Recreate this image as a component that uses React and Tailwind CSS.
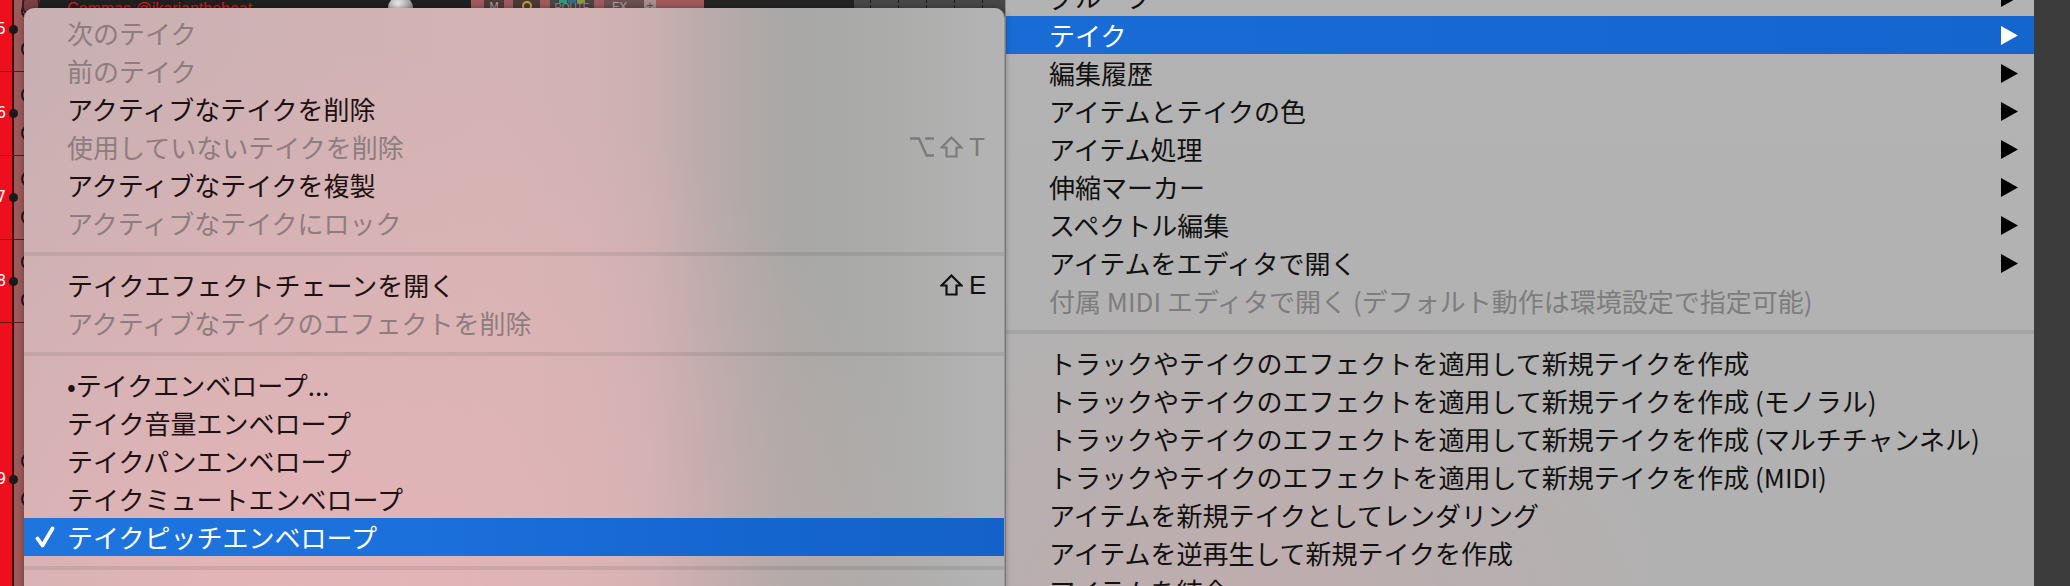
import React from "react";

const leftItems = [
  { t: "次のテイク", d: true },
  { t: "前のテイク", d: true },
  { t: "アクティブなテイクを削除" },
  { t: "使用していないテイクを削除", d: true, sc: "optshiftT" },
  { t: "アクティブなテイクを複製" },
  { t: "アクティブなテイクにロック", d: true },
  { sep: true },
  { t: "テイクエフェクトチェーンを開く", sc: "shiftE" },
  { t: "アクティブなテイクのエフェクトを削除", d: true },
  { sep: true },
  { t: "•テイクエンベロープ..." },
  { t: "テイク音量エンベロープ" },
  { t: "テイクパンエンベロープ" },
  { t: "テイクミュートエンベロープ" },
  { t: "テイクピッチエンベロープ", hl: true, check: true },
  { sep: true },
  { t: "テイクを切り替え" },
];

const rightItems = [
  { t: "グループ", arrow: true },
  { t: "テイク", arrow: true, hl: true },
  { t: "編集履歴", arrow: true },
  { t: "アイテムとテイクの色", arrow: true },
  { t: "アイテム処理", arrow: true },
  { t: "伸縮マーカー", arrow: true },
  { t: "スペクトル編集", arrow: true },
  { t: "アイテムをエディタで開く", arrow: true },
  { t: "付属 MIDI エディタで開く (デフォルト動作は環境設定で指定可能)", d: true },
  { sep: true },
  { t: "トラックやテイクのエフェクトを適用して新規テイクを作成" },
  { t: "トラックやテイクのエフェクトを適用して新規テイクを作成 (モノラル)" },
  { t: "トラックやテイクのエフェクトを適用して新規テイクを作成 (マルチチャンネル)" },
  { t: "トラックやテイクのエフェクトを適用して新規テイクを作成 (MIDI)" },
  { t: "アイテムを新規テイクとしてレンダリング" },
  { t: "アイテムを逆再生して新規テイクを作成" },
  { t: "アイテムを結合" },
];

function OptionKey() {
  return (
    <svg width="24" height="20" viewBox="0 0 24 20" fill="none" stroke="currentColor" strokeWidth="2.4" strokeLinejoin="miter">
      <path d="M0 1.5H9L16.5 18.5H24" />
      <path d="M15 1.5H24" />
    </svg>
  );
}

function ShiftKey() {
  return (
    <svg width="23" height="22" viewBox="0 0 23 22" fill="none" stroke="currentColor" strokeWidth="2.2" strokeLinejoin="miter">
      <path d="M11.5 1.5L21.5 11.5H16.5V20.5H6.5V11.5H1.5Z" />
    </svg>
  );
}

function Check() {
  return (
    <svg width="20" height="22" viewBox="0 0 20 22" fill="none" stroke="white" strokeWidth="3.8" strokeLinecap="round" strokeLinejoin="round">
      <path d="M2.5 12.5L7.5 19.5L17.5 2.5" />
    </svg>
  );
}

function Arrow({ white }) {
  return (
    <svg width="17" height="19" viewBox="0 0 17 19">
      <polygon points="0,0 17,9.5 0,19" fill={white ? "#ffffff" : "#000000"} />
    </svg>
  );
}

function Shortcut({ kind, disabled }) {
  const color = disabled ? "text-[#7b7b7b]" : "text-[#111111]";
  return (
    <div className={`flex items-center gap-[6px] ${color}`}>
      {kind === "optshiftT" && <OptionKey />}
      <ShiftKey />
      <span className="text-[26px] leading-none w-[15px] font-['Liberation_Sans',sans-serif]">
        {kind === "optshiftT" ? "T" : "E"}
      </span>
    </div>
  );
}

function LeftMenu() {
  return (
    <div className="absolute left-[24px] top-[8px] w-[981px] h-[600px] rounded-t-[10px] overflow-hidden border-r border-[#979797] shadow-[0_0_6px_rgba(0,0,0,0.35)] bg-[image:radial-gradient(ellipse_70%_95%_at_25%_100%,rgba(240,182,185,0.65),rgba(240,182,185,0)_100%),linear-gradient(90deg,#c8b0b2_0%,#d0b2b4_30%,#d4b3b4_48%,#d2b2b3_58%,#cbb0b1_64%,#bcabac_69%,#b0a9a8_74%,#a9a8a6_78%,#a9a9a7_83%,#acacab_89%,#b3b3b3_98%)]">
      <div className="flex flex-col pt-[6px]">
        {leftItems.map((it, i) =>
          it.sep ? (
            <div key={i} className="h-[24px] flex items-center">
              <div className="h-[4px] w-full bg-black/[0.08]" />
            </div>
          ) : (
            <div
              key={i}
              className={`h-[38px] flex items-center pl-[11px] pr-[20px] ${
                it.hl
                  ? "bg-[linear-gradient(90deg,#1e75de_0%,#1c70db_40%,#1565cf_75%,#1462c9_100%)] text-white"
                  : it.d
                  ? "text-[#8f7c7e]"
                  : "text-[#1d1113]"
              }`}
            >
              <div className="w-[32px] flex items-center">{it.check && <Check />}</div>
              <span className="text-[26px] leading-none whitespace-nowrap">{it.t}</span>
              <div className="flex-1" />
              {it.sc && <Shortcut kind={it.sc} disabled={it.d} />}
            </div>
          )
        )}
      </div>
    </div>
  );
}

function RightMenu() {
  return (
    <div className="absolute left-[1005px] top-[-22px] w-[1029px] h-[640px] border-l border-[#8e8e8e] bg-[image:radial-gradient(ellipse_45%_55%_at_22%_100%,rgba(205,168,171,0.55),rgba(205,168,171,0)_100%),linear-gradient(180deg,#b3b3b3,#b1b1b1)]">
      <div className="flex flex-col">
        {rightItems.map((it, i) =>
          it.sep ? (
            <div key={i} className="h-[24px] flex items-center">
              <div className="h-[4px] w-full bg-black/[0.08]" />
            </div>
          ) : (
            <div
              key={i}
              className={`h-[38px] flex items-center pl-[13px] pr-[16px] ${
                it.hl
                  ? "bg-[linear-gradient(90deg,#196bd6,#1565cf)] text-white"
                  : it.d
                  ? "text-[#7d7d7d]"
                  : "text-[#111111]"
              }`}
            >
              <div className="w-[30px]" />
              <span className="text-[26px] leading-none whitespace-nowrap">{it.t}</span>
              <div className="flex-1" />
              {it.arrow && <Arrow white={it.hl} />}
            </div>
          )
        )}
      </div>
    </div>
  );
}

function Track({ n, h, first }) {
  return (
    <div
      className={`shrink-0 flex items-center border-b border-[#5a1818] bg-[linear-gradient(90deg,#ee0f1e_0px,#ee0f1e_12px,#3a0a0a_12px,#3a0a0a_14px,#9d5a5a_14px)] ${
        first ? "mt-[-12px]" : ""
      }`}
      style={{ height: h }}
    >
      <div className="w-[9px] shrink-0 overflow-hidden flex justify-end pr-[3px]">
        <span className="text-[15px] leading-none text-white font-['DejaVu_Sans',sans-serif]">{n}</span>
      </div>
      <div className="w-[9px] h-[9px] rounded-full bg-[#1a1a1a] shrink-0" />
      <div className="ml-[3px] flex flex-col gap-[22px] shrink-0">
        <div className="w-[16px] h-[16px] rounded-full border-2 border-[#2a1616]" />
        <div className="w-[16px] h-[16px] rounded-full border-2 border-[#2a1616]" />
      </div>
    </div>
  );
}

function LeftStrip() {
  return (
    <div className="w-[24px] shrink-0 flex flex-col overflow-hidden bg-[#9d5a5a]">
      <Track n="5" h={84} first />
      <Track n="6" h={84} />
      <Track n="7" h={84} />
      <Track n="8" h={83} />
      <Track n="9" h={314} />
    </div>
  );
}

function TopStrip() {
  return (
    <div className="h-[30px] flex shrink-0 font-['Liberation_Sans',sans-serif]">
      <div className="w-[16px] bg-[#9d5a5a] flex items-start">
        <div className="w-[22px] h-[22px] -ml-[2px] -mt-[6px] rounded-full bg-[#7a4042] border-2 border-[#3a1c1c]" />
      </div>
      <div className="w-[431px] bg-[#202020] flex items-start">
        <span className="pl-[27px] pt-[1px] text-[16px] leading-none text-[#e8101c] whitespace-nowrap">
          Commas @ikarianthebeat
        </span>
        <div className="flex-1" />
        <div className="w-[25px] h-[24px] -mt-[4px] mr-[58px] rounded-full bg-[radial-gradient(circle_at_40%_35%,#f0f0f0,#9a9a9a_60%,#5a5a5a)]" />
      </div>
      <div className="w-[13px] bg-[#a05a5c]" />
      <div className="w-[20px] bg-[#4f3a3a] text-[11px] text-[#b0a0a0] leading-none pt-[1px] text-center">M</div>
      <div className="w-[9px] bg-[#a05a5c]" />
      <div className="w-[27px] bg-[#4a3a38] flex justify-center pt-[1px]">
        <div className="w-[10px] h-[10px] rounded-full border-2 border-[#c8a030]" />
      </div>
      <div className="w-[10px] bg-[#a05a5c]" />
      <div className="w-[44px] bg-[#4b4343] flex flex-col items-center">
        <div className="flex gap-[1px]">
          <div className="w-[8px] h-[3px] bg-[#2a9a80]" />
          <div className="w-[8px] h-[3px] bg-[#3a6a8a]" />
          <div className="w-[8px] h-[3px] bg-[#8a9a40]" />
        </div>
        <span className="text-[10px] leading-none text-[#9a8a8a]">ROUTE</span>
      </div>
      <div className="w-[10px] bg-[#a05a5c]" />
      <div className="w-[52px] flex">
        <div className="w-[40px] bg-[#6a5050] text-[12px] leading-none pt-[1px] pl-[8px] text-[#b0a0a0]">FX</div>
        <div className="flex-1 bg-[#a89090] text-[12px] leading-none text-[#5a4a4a] text-center">+</div>
      </div>
      <div className="w-[48px] bg-[#a05a5c]" />
      <div className="w-[150px] bg-[#232323]" />
      <div className="w-[151px] bg-[#474747] flex pl-[16px] gap-[27px]">
        {[0, 1, 2, 3, 4].map((k) => (
          <div key={k} className="w-0 h-full border-l border-dashed border-[#1a1a1a]" />
        ))}
      </div>
    </div>
  );
}

export default function App() {
  return (
    <div className="relative w-[2070px] h-[586px] overflow-hidden bg-[#3c3c3c] font-['Noto_Sans_CJK_JP','Noto_Sans',sans-serif]">
      <div className="flex h-full">
        <LeftStrip />
        <div className="w-[981px] flex flex-col">
          <TopStrip />
          <div className="flex-1 bg-[#9d5a5a]" />
        </div>
        <div className="flex-1 bg-[#3c3c3c]" />
      </div>
      <RightMenu />
      <LeftMenu />
    </div>
  );
}
